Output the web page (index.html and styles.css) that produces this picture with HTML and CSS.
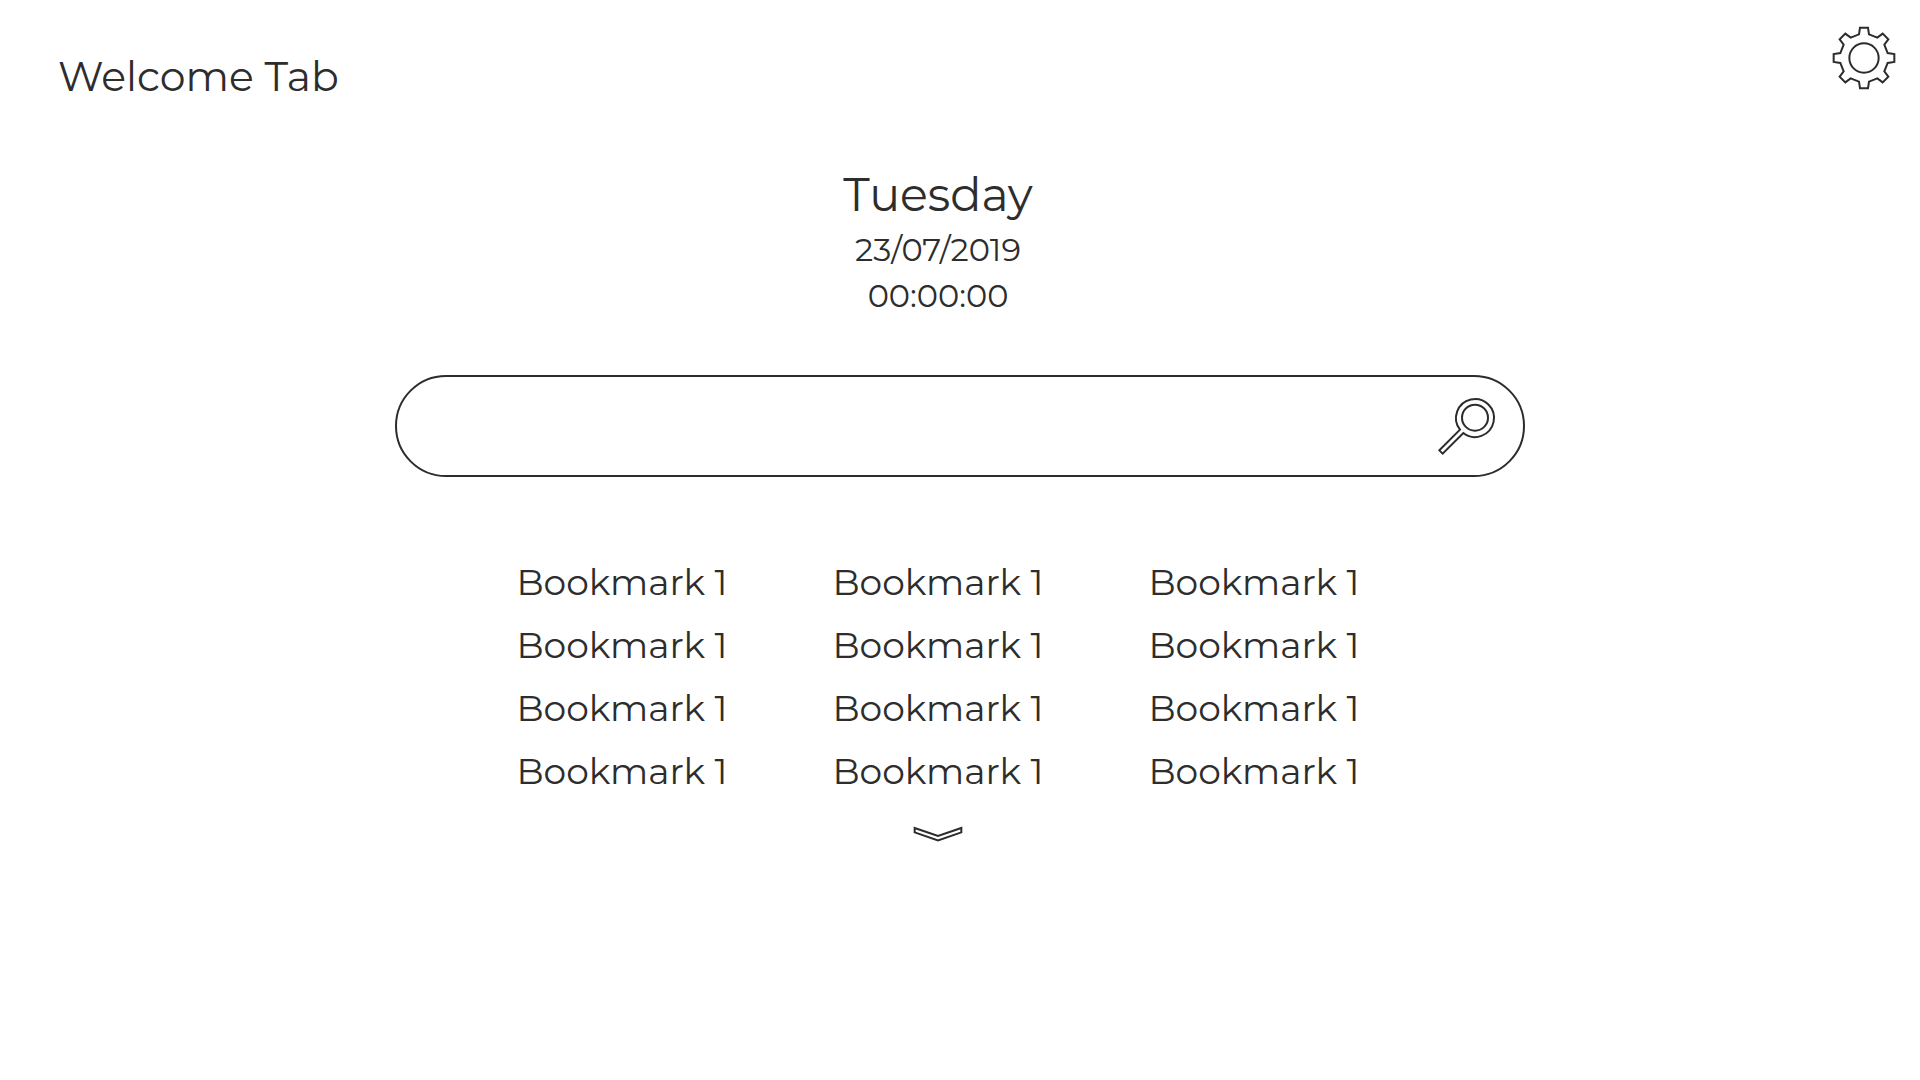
FILE: index.html
```html
<!DOCTYPE html>
<html lang="en">
<head>
<meta charset="utf-8">
<meta name="viewport" content="width=device-width, initial-scale=1">
<title>Welcome Tab</title>
<link rel="stylesheet" href="styles.css">
</head>
<body>
<header class="topbar">
  <h1 class="title">Welcome Tab</h1>
  <button class="icon-button" type="button" aria-label="Settings">
    <svg class="gear" viewBox="-96 -96 192 192" aria-hidden="true">
      <path d="M-15-71L-12-91 12-91 15-71 40-61 56-73 73-56 61-40 71-15 91-12 91 12 71 15 61 40 73 56 56 73 40 61 15 71 12 91-12 91-15 71-40 61-56 73-73 56-61 40-71 15-91 12-91-12-71-15-61-40-73-56-56-73-40-61Z"/>
      <circle r="44"/>
    </svg>
  </button>
</header>
<main class="content">
  <section class="clock">
    <p class="day">Tuesday</p>
    <p class="date">23/07/2019</p>
    <p class="time">00:00:00</p>
  </section>
  <form class="search" role="search">
    <input class="search-input" type="text" aria-label="Search">
    <button class="icon-button" type="submit" aria-label="Search">
      <svg class="lens" viewBox="51 78 180 180" aria-hidden="true">
        <path d="M120 179L58 241 68 251 130 189A57 57 0 1 0 120 179Z"/>
        <circle cx="165" cy="143" r="39"/>
      </svg>
    </button>
  </form>
  <nav class="bookmarks" aria-label="Bookmarks">
    <a href="#">Bookmark 1</a><a href="#">Bookmark 1</a><a href="#">Bookmark 1</a>
    <a href="#">Bookmark 1</a><a href="#">Bookmark 1</a><a href="#">Bookmark 1</a>
    <a href="#">Bookmark 1</a><a href="#">Bookmark 1</a><a href="#">Bookmark 1</a>
    <a href="#">Bookmark 1</a><a href="#">Bookmark 1</a><a href="#">Bookmark 1</a>
  </nav>
  <div class="more">
    <button class="icon-button" type="button" aria-label="Show more bookmarks">
      <svg class="chevron" viewBox="36 43 156 54" aria-hidden="true">
        <path d="M44 52L114 76 184 52V65L114 89 44 65Z"/>
      </svg>
    </button>
  </div>
</main>
</body>
</html>
```
FILE: styles.css
```css
* {
  box-sizing: border-box;
}

body {
  margin: 0;
  background: #fff;
  color: #2d2d2d;
  font-family: Montserrat, Inter, sans-serif;
  font-weight: 400;
}

h1,
p {
  margin: 0;
  font-weight: inherit;
}

.topbar {
  display: flex;
  justify-content: space-between;
  align-items: flex-start;
  padding: 26px 24px 0 58px;
}

.title {
  padding-top: 24px;
  font-size: 41px;
  line-height: 52px;
}

.icon-button {
  display: block;
  flex: none;
  padding: 0;
  border: 0;
  background: none;
  cursor: pointer;
}

.icon-button svg {
  display: block;
  fill: none;
  stroke: #2d2b2c;
  stroke-width: 6;
}

.gear {
  width: 64px;
  height: 64px;
}

.content {
  display: flex;
  flex-direction: column;
  align-items: center;
}

.clock,
.bookmarks,
.more {
  margin-right: 44px;
}

.clock {
  padding-top: 61px;
  text-align: center;
}

.day {
  font-size: 46px;
  line-height: 64px;
}

.date,
.time {
  font-size: 32px;
  line-height: 46px;
}

.search {
  display: flex;
  align-items: center;
  width: 90%;
  max-width: 1130px;
  height: 102px;
  margin-top: 56px;
  padding: 0 26px 0 50px;
  border: 2px solid #2d2b2c;
  border-radius: 51px;
}

.search-input {
  flex: 1;
  min-width: 0;
  height: 60px;
  border: 0;
  outline: 0;
  background: none;
  color: inherit;
  font: inherit;
  font-size: 36px;
}

.lens {
  width: 60px;
  height: 60px;
}

.bookmarks {
  display: grid;
  grid-template-columns: repeat(3, 316px);
  margin-top: 74px;
  text-align: center;
  font-size: 36px;
  line-height: 63px;
}

.bookmarks a {
  color: inherit;
  text-decoration: none;
}

.more {
  margin-top: 22px;
}

.chevron {
  width: 52px;
  height: 18px;
}
```
